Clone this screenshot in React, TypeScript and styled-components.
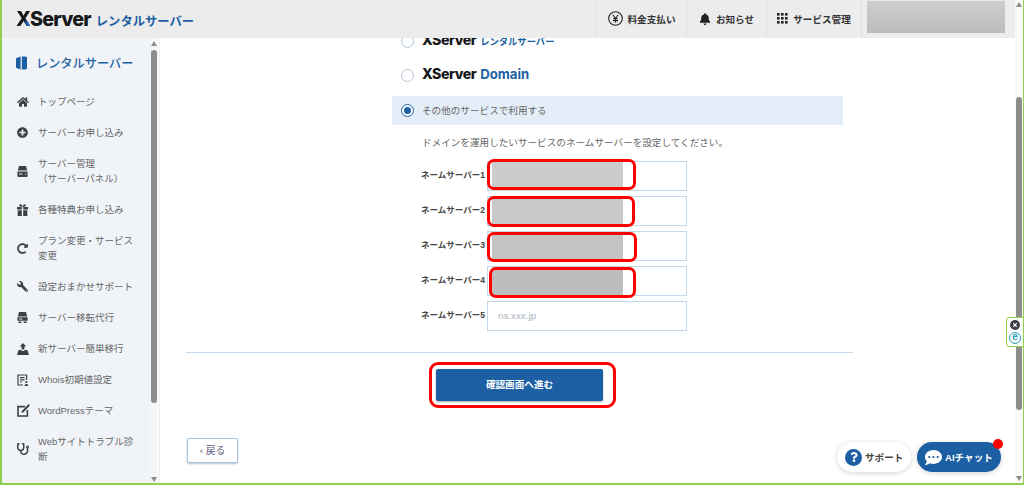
import React from 'react';
import styled, { createGlobalStyle } from 'styled-components';
import { FaHome, FaPlusCircle, FaRedoAlt, FaWrench, FaStethoscope, FaBell, FaQuestion, FaCommentDots, FaTimes } from 'react-icons/fa';

const GlobalStyle = createGlobalStyle`
  html, body { margin: 0; padding: 0; background: #fff; }
  * { box-sizing: border-box; }
  body {
    font-family: "Liberation Sans", "Noto Sans CJK JP", sans-serif;
    color: #555;
  }
`;

const Frame = styled.div`
  position: relative;
  width: 1024px;
  height: 485px;
  display: flex;
  overflow: hidden;
  border-left: 2px solid #8fd14f;
  border-bottom: 2px solid #8fd14f;
  border-right: 1px solid #8fd14f;
`;

const Page = styled.div`
  flex: 1;
  min-width: 0;
  display: flex;
  flex-direction: column;
`;

const Header = styled.header`
  position: relative;
  z-index: 2;
  flex: 0 0 38px;
  display: flex;
  align-items: center;
  background: #ececec;
  padding-left: 14px;
`;

const Logo = styled.div`
  display: flex;
  align-items: baseline;
  flex: 1;
  padding-bottom: 1px;
`;

const LogoMark = styled.span`
  font-family: Inter, "Liberation Sans", sans-serif;
  font-weight: 800;
  font-size: 19.8px;
  letter-spacing: -0.8px;
  color: #16181c;
`;

const LogoX = styled.span`
  background: linear-gradient(135deg, #16181c 55%, #1c5fa3 70%);
  -webkit-background-clip: text;
  background-clip: text;
  color: transparent;
`;

const LogoSub = styled.span`
  margin-left: 5px;
  font-size: 12.3px;
  font-weight: 700;
  color: #1c5fa3;
`;

const HeaderItem = styled.div<{ $width: number }>`
  width: ${p => p.$width}px;
  height: 38px;
  display: flex;
  align-items: center;
  justify-content: center;
  gap: 5px;
  padding-bottom: 1px;
  border-left: 1px solid #e0e0e0;
  font-size: 9.6px;
  font-weight: 700;
  color: #333;
  svg { flex: none; }
`;

const AccountBlock = styled.div`
  width: 154px;
  height: 38px;
  padding: 1px 10px 5px 5px;
  border-left: 1px solid #e0e0e0;
  display: flex;
`;

const AccountFill = styled.div`
  flex: 1;
  background: linear-gradient(#cfcfcf, #bbb);
`;

const Body = styled.div`
  flex: 1;
  min-height: 0;
  display: flex;
`;

const Sidebar = styled.aside`
  flex: 0 0 148px;
  background: #f0f4f8;
  padding: 16px 0 0 14px;
  overflow: hidden;
`;

const SideTitle = styled.div`
  display: flex;
  align-items: center;
  gap: 9px;
  height: 18px;
  margin-bottom: 14px;
  font-size: 12.2px;
  font-weight: 500;
  color: #1c5fa3;
`;

const SideList = styled.ul`
  list-style: none;
  margin: 0;
  padding: 0;
`;

const SideItem = styled.li`
  display: flex;
  align-items: center;
  padding: 8px 0;
`;

const SideIcon = styled.span<{ $flip?: boolean }>`
  flex: 0 0 22px;
  display: flex;
  padding-left: 1px;
  color: #3c3f44;
  svg { transform: ${p => (p.$flip ? 'scaleX(-1)' : 'none')}; }
`;

const SideLabel = styled.span`
  width: 100px;
  font-size: 9.5px;
  line-height: 15px;
  color: #666;
`;

const SideScrollbar = styled.div`
  position: relative;
  flex: 0 0 8px;
  background: #f6f6f6;
`;

const Thumb = styled.div<{ $top: number; $height: number }>`
  position: absolute;
  top: ${p => p.$top}px;
  left: 1px;
  right: 1px;
  height: ${p => p.$height}px;
  background: #8c8c8c;
  border-radius: 3px;
`;

const Arrow = styled.div<{ $down?: boolean; $offset: number }>`
  position: absolute;
  left: 50%;
  margin-left: -3px;
  ${p => (p.$down ? 'bottom' : 'top')}: ${p => p.$offset}px;
  width: 0;
  height: 0;
  border-left: 3px solid transparent;
  border-right: 3px solid transparent;
  ${p => (p.$down ? 'border-top' : 'border-bottom')}: 5px solid #8c8c8c;
`;

const Main = styled.main`
  flex: 1;
  min-width: 0;
  overflow: hidden;
  border-left: 1px solid #ededed;
  margin-left: 1px;
  padding: 0 0 0 26px;
`;

const Form = styled.div`
  margin: -14px 0 0 206px;
  width: 451px;
`;

const ChoiceRow = styled.label<{ $active?: boolean }>`
  display: flex;
  align-items: center;
  gap: 8px;
  padding-left: 9px;
  height: ${p => (p.$active ? 29 : 34)}px;
  margin-top: ${p => (p.$active ? 4 : 0)}px;
  background: ${p => (p.$active ? '#e4eef8' : 'transparent')};
  font-size: 9.6px;
  color: #666;
`;

const ChoiceText = styled.span`
  padding-bottom: 2px;
`;

const Radio = styled.span<{ $checked?: boolean }>`
  flex: none;
  width: 13px;
  height: 13px;
  border-radius: 50%;
  background: #fff;
  border: 1px solid ${p => (p.$checked ? '#1c5fa3' : '#b4c6d8')};
  display: flex;
  align-items: center;
  justify-content: center;
  &::after {
    content: '';
    display: ${p => (p.$checked ? 'block' : 'none')};
    width: 7px;
    height: 7px;
    border-radius: 50%;
    background: #1c5fa3;
  }
`;

const ServiceLogo = styled.span`
  padding-bottom: 3px;
  white-space: nowrap;
`;

const ServiceMark = styled.span`
  font-family: Inter, "Liberation Sans", sans-serif;
  font-weight: 800;
  font-size: 14.2px;
  letter-spacing: -0.5px;
  color: #16181c;
`;

const ServiceSub = styled.span<{ $small?: boolean }>`
  margin-left: 4px;
  font-family: Inter, "Noto Sans CJK JP", sans-serif;
  font-weight: 700;
  font-size: ${p => (p.$small ? 9.3 : 13.2)}px;
  color: #1c5fa3;
`;

const Hint = styled.p`
  margin: 11px 0 11px 30px;
  font-size: 9.6px;
  line-height: 14px;
  color: #666;
`;

const Fields = styled.div`
  display: flex;
  flex-direction: column;
  gap: 5px;
`;

const FieldRow = styled.div`
  display: flex;
  align-items: center;
  padding-left: 29px;
`;

const FieldLabel = styled.span`
  flex: 0 0 66px;
  padding-bottom: 4px;
  font-size: 8.5px;
  font-weight: 700;
  color: #444;
  white-space: nowrap;
`;

const InputWrap = styled.div`
  position: relative;
  width: 200px;
  height: 30px;
`;

const Input = styled.div`
  height: 100%;
  padding: 0 0 2px 10px;
  display: flex;
  align-items: center;
  background: #fff;
  border: 1px solid #c5d8ea;
  font-size: 9.8px;
  color: #aab4c0;
`;

const Redact = styled.div<{ $shade: string }>`
  position: absolute;
  left: 5px;
  top: 1px;
  bottom: 1px;
  width: 131px;
  background: ${p => p.$shade};
`;

const Ring = styled.div<{ $left: number; $top: number; $w: number; $h: number }>`
  position: absolute;
  left: ${p => p.$left}px;
  top: ${p => p.$top}px;
  width: ${p => p.$w}px;
  height: ${p => p.$h}px;
  border: 3px solid #f00;
  border-radius: 7px;
`;

const Divider = styled.hr`
  width: 667px;
  height: 1px;
  margin: 21px 0 16px;
  border: 0;
  background: #c5d8ea;
`;

const SubmitWrap = styled.div`
  position: relative;
  width: 167px;
  margin-left: 250px;
`;

const Submit = styled.button`
  display: block;
  width: 100%;
  height: 32px;
  padding: 0 0 2px;
  border: 0;
  border-radius: 2px;
  background: #1c5fa3;
  box-shadow: 0 1px 2px rgba(0, 0, 0, 0.35);
  color: #fff;
  font: 700 9.6px "Liberation Sans", "Noto Sans CJK JP", sans-serif;
`;

const BackButton = styled.button`
  display: flex;
  align-items: center;
  justify-content: center;
  gap: 3px;
  width: 51px;
  height: 25px;
  margin: 37px 0 0 1px;
  padding: 0 0 2px;
  background: #fff;
  border: 1px solid #a9c4de;
  border-radius: 2px;
  box-shadow: 0 1px 2px rgba(60, 100, 140, 0.4);
  color: #557;
  font: 400 9.8px "Liberation Sans", "Noto Sans CJK JP", sans-serif;
`;

const PageScrollbar = styled.div`
  position: relative;
  flex: 0 0 8px;
  background: #fafafa;
`;

const SideTab = styled.div`
  position: absolute;
  z-index: 3;
  top: 317px;
  right: -1px;
  width: 18px;
  height: 30px;
  display: flex;
  flex-direction: column;
  align-items: center;
  justify-content: center;
  gap: 2px;
  background: #fff;
  border: 1px solid #8fd14f;
  border-radius: 3px 0 0 3px;
`;

const TabClose = styled.span`
  width: 10px;
  height: 10px;
  border-radius: 50%;
  background: #3c3f44;
  color: #fff;
  display: flex;
  align-items: center;
  justify-content: center;
`;

const TabE = styled.span`
  width: 12px;
  height: 12px;
  border-radius: 50%;
  border: 1.5px solid #2a9db5;
  color: #2a9db5;
  font-size: 10px;
  font-weight: 700;
  line-height: 8px;
  text-align: center;
`;

const Floating = styled.div`
  position: absolute;
  z-index: 3;
  left: 835px;
  top: 442px;
  display: flex;
  gap: 6px;
`;

const Pill = styled.div<{ $primary?: boolean }>`
  position: relative;
  height: 30px;
  width: ${p => (p.$primary ? 84 : 74)}px;
  padding-left: 8px;
  display: flex;
  align-items: center;
  gap: 3px;
  border-radius: 15px;
  background: ${p => (p.$primary ? '#1c5fa3' : '#fff')};
  color: ${p => (p.$primary ? '#fff' : '#444')};
  box-shadow: 0 1px 5px rgba(0, 0, 0, 0.18);
  font-size: 9.6px;
  font-weight: 700;
`;

const HelpDot = styled.span`
  width: 17px;
  height: 17px;
  border-radius: 50%;
  background: #1c5fa3;
  color: #fff;
  display: flex;
  align-items: center;
  justify-content: center;
`;

const Notice = styled.span`
  position: absolute;
  top: -3px;
  right: -2px;
  width: 10px;
  height: 10px;
  border-radius: 50%;
  background: #f00;
`;

const YenIcon = () => (
  <svg width="15" height="15" viewBox="0 0 15 15" fill="none" stroke="#222" strokeWidth="1.1">
    <circle cx="7.5" cy="7.5" r="6.8" />
    <path d="M4.8 3.8 7.5 7.6 10.2 3.8M7.5 7.6v3.8M5 7.8h5M5 9.6h5" />
  </svg>
);

const DotsIcon = () => (
  <svg width="11" height="11" viewBox="0 0 11 11" fill="#222">
    {[0, 4, 8].map(y => [0, 4, 8].map(x => <rect key={`${x}-${y}`} x={x} y={y} width="2.6" height="2.6" />))}
  </svg>
);

const BookIcon = () => (
  <svg width="11" height="14" viewBox="0 0 11 14" fill="#1c5fa3">
    <path d="M0 2.2 4.6.4V13.6L0 11.8ZM5.8.6H9.4A1.6 1.6 0 0 1 11 2.2v9.6a1.6 1.6 0 0 1-1.6 1.6H5.8Z" />
  </svg>
);

const ServerIcon = () => (
  <svg width="11" height="11" viewBox="0 0 11 11" fill="#3c3f44">
    <path d="M2 0h7l1.2 4.6H.8ZM.4 5.6h10.2V10a1 1 0 0 1-1 1H1.4a1 1 0 0 1-1-1Z" />
    <path d="M2 7.6h3.4v1H2ZM8 7.4h1.2v1.2H8Z" fill="#f0f4f8" />
  </svg>
);

const MoveServerIcon = () => (
  <svg width="11" height="11" viewBox="0 0 11 11" fill="#3c3f44">
    <path d="M2 0h7l1.2 4.4H.8ZM.4 5.2h10.2v3.6H.4ZM1.4 9.6h3v1.4h-3ZM6.6 9.6h3v1.4h-3Z" />
    <path d="M2 6.6h3.4v.9H2Z" fill="#f0f4f8" />
  </svg>
);

const GiftIcon = () => (
  <svg width="11" height="12" viewBox="0 0 11 12" fill="#3c3f44">
    <path d="M0 3h4.8v2.4H0ZM6.2 3H11v2.4H6.2ZM.7 6.2h4.1V12H.7ZM6.2 6.2h4.1V12H6.2Z" />
    <path d="M5.5 3 3 2.6C1.6 2 2.2 0 3.6.3 4.6.5 5.2 1.6 5.5 3c.3-1.4.9-2.5 1.9-2.7C8.8 0 9.4 2 8 2.6Z" />
  </svg>
);

const MigrateIcon = () => (
  <svg width="12" height="12" viewBox="0 0 12 12" fill="#3c3f44">
    <path d="M6 0 9.2 3.6H7.4V6.4H4.6V3.6H2.8ZM1.6 7h2.6l.8 1h2l.8-1h2.6L12 12H0Z" />
  </svg>
);

const WhoisIcon = () => (
  <svg width="12" height="12" viewBox="0 0 12 12" fill="none" stroke="#3c3f44" strokeWidth="1.2">
    <path d="M6 11H1V1h8.6v5M3 3.6h4.6M3 5.8h4.6M3 8h2" />
    <circle cx="9.4" cy="8" r="1.1" fill="#3c3f44" stroke="none" />
    <path d="M7.6 12c0-1.4.8-2 1.8-2s1.8.6 1.8 2Z" fill="#3c3f44" stroke="none" />
  </svg>
);

const ThemeIcon = () => (
  <svg width="13" height="13" viewBox="0 0 13 13" fill="none" stroke="#3c3f44" strokeWidth="1.6">
    <path d="M8 2.6H1V12h9.4V6" />
    <path d="M5 8.4 12.2.8" strokeWidth="2" />
  </svg>
);

const menu: { icon: React.ReactNode; label: React.ReactNode; flip?: boolean }[] = [
  { icon: <FaHome size={12} />, label: 'トップページ' },
  { icon: <FaPlusCircle size={11} />, label: 'サーバーお申し込み' },
  { icon: <ServerIcon />, label: <>サーバー管理<br />（サーバーパネル）</> },
  { icon: <GiftIcon />, label: '各種特典お申し込み' },
  { icon: <FaRedoAlt size={11} />, label: 'プラン変更・サービス変更' },
  { icon: <FaWrench size={11} />, label: '設定おまかせサポート', flip: true },
  { icon: <MoveServerIcon />, label: 'サーバー移転代行' },
  { icon: <MigrateIcon />, label: '新サーバー簡単移行' },
  { icon: <WhoisIcon />, label: 'Whois初期値設定' },
  { icon: <ThemeIcon />, label: 'WordPressテーマ' },
  { icon: <FaStethoscope size={12} />, label: 'Webサイトトラブル診断' },
];

const nameServers = [
  { shade: '#cccccc', ring: { $left: 0, $top: -2, $w: 149, $h: 31 } },
  { shade: '#c9c9c9', ring: { $left: 0, $top: 0, $w: 148, $h: 31 } },
  { shade: '#c3c3c3', ring: { $left: 0, $top: 1, $w: 150, $h: 30 } },
  { shade: '#bdbdbd', ring: { $left: 2, $top: 1, $w: 147, $h: 31 } },
];

const SubmitRing = styled(Ring)`
  border-radius: 9px;
`;

export default function App() {
  return (
    <>
      <GlobalStyle />
      <Frame>
        <Page>
          <Header>
            <Logo>
              <LogoMark><LogoX>X</LogoX>Server</LogoMark>
              <LogoSub>レンタルサーバー</LogoSub>
            </Logo>
            <HeaderItem $width={90}><YenIcon />料金支払い</HeaderItem>
            <HeaderItem $width={80}><FaBell size={12} color="#222" />お知らせ</HeaderItem>
            <HeaderItem $width={95}><DotsIcon />サービス管理</HeaderItem>
            <AccountBlock><AccountFill /></AccountBlock>
          </Header>
          <Body>
            <Sidebar>
              <SideTitle><BookIcon />レンタルサーバー</SideTitle>
              <SideList>
                {menu.map((m, i) => (
                  <SideItem key={i}>
                    <SideIcon $flip={m.flip}>{m.icon}</SideIcon>
                    <SideLabel>{m.label}</SideLabel>
                  </SideItem>
                ))}
              </SideList>
            </Sidebar>
            <SideScrollbar>
              <Arrow $offset={3} />
              <Thumb $top={12} $height={353} />
              <Arrow $down $offset={1} />
            </SideScrollbar>
            <Main>
              <Form>
                <ChoiceRow>
                  <Radio />
                  <ServiceLogo><ServiceMark>XServer</ServiceMark><ServiceSub $small>レンタルサーバー</ServiceSub></ServiceLogo>
                </ChoiceRow>
                <ChoiceRow>
                  <Radio />
                  <ServiceLogo><ServiceMark>XServer</ServiceMark><ServiceSub>Domain</ServiceSub></ServiceLogo>
                </ChoiceRow>
                <ChoiceRow $active>
                  <Radio $checked />
                  <ChoiceText>その他のサービスで利用する</ChoiceText>
                </ChoiceRow>
                <Hint>ドメインを運用したいサービスのネームサーバーを設定してください。</Hint>
                <Fields>
                  {nameServers.map((n, i) => (
                    <FieldRow key={i}>
                      <FieldLabel>ネームサーバー{i + 1}</FieldLabel>
                      <InputWrap>
                        <Input />
                        <Redact $shade={n.shade} />
                        <Ring {...n.ring} />
                      </InputWrap>
                    </FieldRow>
                  ))}
                  <FieldRow>
                    <FieldLabel>ネームサーバー5</FieldLabel>
                    <InputWrap><Input>ns.xxx.jp</Input></InputWrap>
                  </FieldRow>
                </Fields>
              </Form>
              <Divider />
              <SubmitWrap>
                <Submit>確認画面へ進む</Submit>
                <SubmitRing $left={-7} $top={-7} $w={187} $h={46} />
              </SubmitWrap>
              <BackButton>‹ 戻る</BackButton>
            </Main>
          </Body>
        </Page>
        <PageScrollbar>
          <Arrow $offset={2} />
          <Thumb $top={97} $height={313} />
          <Arrow $down $offset={2} />
        </PageScrollbar>
        <SideTab>
          <TabClose><FaTimes size={6} /></TabClose>
          <TabE>e</TabE>
        </SideTab>
        <Floating>
          <Pill>
            <HelpDot><FaQuestion size={10} /></HelpDot>
            サポート
          </Pill>
          <Pill $primary>
            <FaCommentDots size={17} color="#fff" />
            AIチャット
            <Notice />
          </Pill>
        </Floating>
      </Frame>
    </>
  );
}
